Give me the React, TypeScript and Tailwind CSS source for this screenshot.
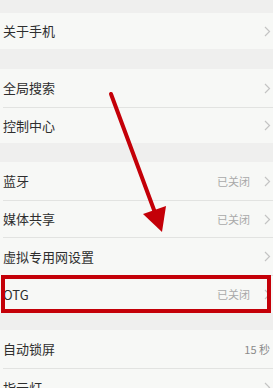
import React from "react";

const font = { fontFamily: '"Noto Sans CJK SC", "Noto Sans", sans-serif' };

function Chevron() {
  return (
    <svg width="7" height="11" viewBox="0 0 7 11" className="shrink-0">
      <path d="M1 1 L5.5 5.5 L1 10" fill="none" stroke="#c4c4c4" strokeWidth="1.2" />
    </svg>
  );
}

function Row({
  label,
  value,
  divider,
  h,
  chevron = true,
  children,
}: {
  label: string;
  value?: string;
  divider?: boolean;
  h: string;
  chevron?: boolean;
  children?: React.ReactNode;
}) {
  return (
    <div className={`relative bg-[#f7f8f6] pl-[3px] ${h}`}>
      <div
        className={`flex h-full items-center pr-[2px] ${divider ? "border-t border-[#e2e3e1]" : ""}`}
      >
        <span className="flex-1 text-[13px] text-[#2e2e2e]">{label}</span>
        {value && <span className="mr-[14px] text-[11px] text-[#a9a9a9]">{value}</span>}
        {chevron && <Chevron />}
      </div>
      {children}
    </div>
  );
}

export default function App() {
  return (
    <div className="relative h-[388px] w-[273px] overflow-hidden bg-[#efefee]" style={font}>
      <div className="flex flex-col">
        <div className="h-[13px]" />
        <Row label="关于手机" h="h-[36px]" />
        <div className="h-[20px]" />
        <Row label="全局搜索" h="h-[38px]" />
        <Row label="控制中心" h="h-[36px]" divider />
        <div className="h-[19px]" />
        <Row label="蓝牙" value="已关闭" h="h-[38px]" />
        <Row label="媒体共享" value="已关闭" h="h-[37px]" divider />
        <Row label="虚拟专用网设置" h="h-[38px]" divider />
        <Row label="OTG" value="已关闭" h="h-[38px]" divider>
          <div className="absolute inset-y-0 left-[1px] right-[2px] border-[4px] border-[#c40008]" />
        </Row>
        <div className="h-[17px]" />
        <div className="relative bg-[#f7f8f6] pl-[3px] h-[38px]">
          <div className="flex h-full items-center pr-[3px]">
            <span className="flex-1 text-[13px] text-[#2e2e2e]">自动锁屏</span>
            <span className="text-[11px] text-[#8a8a8a]">15 秒</span>
          </div>
        </div>
        <Row label="指示灯" h="h-[38px]" divider />
      </div>
      <svg className="pointer-events-none absolute left-0 top-0" width="273" height="388" viewBox="0 0 273 388">
        <line x1="111" y1="94" x2="157" y2="218" stroke="#c40008" strokeWidth="4" strokeLinecap="round" />
        <polygon points="143,214 166,206 162,232" fill="#c40008" />
      </svg>
    </div>
  );
}
